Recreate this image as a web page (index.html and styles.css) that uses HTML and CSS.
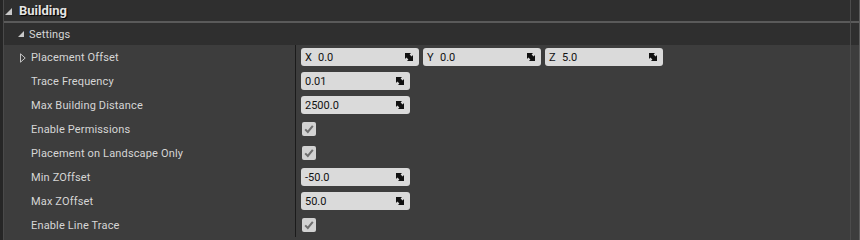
FILE: index.html
```html
<!DOCTYPE html>
<html lang="en">
<head>
  <meta charset="UTF-8">
  <title>Details - Building</title>
  <link rel="stylesheet" href="styles.css">
</head>
<body>
  <div class="details">
    <div class="tree">
      <!-- Category header -->
      <div class="category">
        <svg class="arrow-open" width="7" height="7" viewBox="0 0 7 7"><polygon points="7,0 7,7 0,7"/></svg>
        <span>Building</span>
      </div>

      <!-- Subcategory -->
      <div class="subcategory">
        <svg class="arrow-open small" width="6" height="6" viewBox="0 0 6 6"><polygon points="6,0 6,6 0,6"/></svg>
        <span>Settings</span>
      </div>

      <div class="rows">
        <div class="row">
          <div class="name">
            <svg class="expander" width="6" height="10" viewBox="0 0 6 10"><path d="M0.5 0.8 L5.2 5 L0.5 9.2 Z"/></svg>
            <span>Placement Offset</span>
          </div>
          <div class="value vector">
            <div class="field wide"><span class="axis">X</span><span class="num">0.0</span><svg class="spin" viewBox="0 0 8 8"><path d="M0 0 H6 L4.6 1.4 L6.6 3.4 L8 2 V8 H2 L3.4 6.6 L1.4 4.6 L0 6 Z"/></svg></div>
            <div class="field wide"><span class="axis">Y</span><span class="num">0.0</span><svg class="spin" viewBox="0 0 8 8"><path d="M0 0 H6 L4.6 1.4 L6.6 3.4 L8 2 V8 H2 L3.4 6.6 L1.4 4.6 L0 6 Z"/></svg></div>
            <div class="field wide"><span class="axis">Z</span><span class="num">5.0</span><svg class="spin" viewBox="0 0 8 8"><path d="M0 0 H6 L4.6 1.4 L6.6 3.4 L8 2 V8 H2 L3.4 6.6 L1.4 4.6 L0 6 Z"/></svg></div>
          </div>
        </div>

        <div class="row">
          <div class="name"><span>Trace Frequency</span></div>
          <div class="value">
            <div class="field"><span class="num">0.01</span><svg class="spin" viewBox="0 0 8 8"><path d="M0 0 H6 L4.6 1.4 L6.6 3.4 L8 2 V8 H2 L3.4 6.6 L1.4 4.6 L0 6 Z"/></svg></div>
          </div>
        </div>

        <div class="row">
          <div class="name"><span>Max Building Distance</span></div>
          <div class="value">
            <div class="field"><span class="num">2500.0</span><svg class="spin" viewBox="0 0 8 8"><path d="M0 0 H6 L4.6 1.4 L6.6 3.4 L8 2 V8 H2 L3.4 6.6 L1.4 4.6 L0 6 Z"/></svg></div>
          </div>
        </div>

        <div class="row">
          <div class="name"><span>Enable Permissions</span></div>
          <div class="value">
            <div class="check"><svg viewBox="0 0 14 14"><path d="M3.2 7.4 L5.8 10 L10.8 3.8"/></svg></div>
          </div>
        </div>

        <div class="row">
          <div class="name"><span>Placement on Landscape Only</span></div>
          <div class="value">
            <div class="check"><svg viewBox="0 0 14 14"><path d="M3.2 7.4 L5.8 10 L10.8 3.8"/></svg></div>
          </div>
        </div>

        <div class="row">
          <div class="name"><span>Min ZOffset</span></div>
          <div class="value">
            <div class="field"><span class="num">-50.0</span><svg class="spin" viewBox="0 0 8 8"><path d="M0 0 H6 L4.6 1.4 L6.6 3.4 L8 2 V8 H2 L3.4 6.6 L1.4 4.6 L0 6 Z"/></svg></div>
          </div>
        </div>

        <div class="row">
          <div class="name"><span>Max ZOffset</span></div>
          <div class="value">
            <div class="field"><span class="num">50.0</span><svg class="spin" viewBox="0 0 8 8"><path d="M0 0 H6 L4.6 1.4 L6.6 3.4 L8 2 V8 H2 L3.4 6.6 L1.4 4.6 L0 6 Z"/></svg></div>
          </div>
        </div>

        <div class="row">
          <div class="name"><span>Enable Line Trace</span></div>
          <div class="value">
            <div class="check"><svg viewBox="0 0 14 14"><path d="M3.2 7.4 L5.8 10 L10.8 3.8"/></svg></div>
          </div>
        </div>
      </div>
    </div>

    <!-- scroll gutter on the right -->
    <div class="gutter"></div>
  </div>
</body>
</html>
```

FILE: styles.css
```css
:root {
  --header-bg: #2f2f2f;
  --row-bg: #3d3d3d;
  --line: #5a5a5a;
  --text: #d6d6d6;
  --field-bg: #dadada;
  --font: Roboto, "Liberation Sans", sans-serif;
}

body {
  margin: 0;
  padding: 0;
  background: #262626;
  font-family: var(--font);
  height: 240px;
  overflow: hidden;
}

/* Whole details panel */
.details {
  display: flex;
  margin-left: 3px;
  height: 240px;
}

.tree {
  flex: 1;
  border-left: 1px solid #4a4a4a;
  border-right: 1px solid #4c4c4c;
  background: var(--row-bg);
  display: flex;
  flex-direction: column;
}

/* Scrollbar gutter keeps the same bands as the tree */
.gutter {
  width: 8px;
  border-right: 1px solid #5e5e5e;
  background: linear-gradient(to bottom,
    var(--header-bg) 0, var(--header-bg) 21px,
    var(--line) 21px, var(--line) 23px,
    var(--header-bg) 23px, var(--header-bg) 45px,
    var(--row-bg) 45px);
}

/* Category header */
.category {
  height: 21px;
  background: var(--header-bg);
  border-bottom: 2px solid var(--line);
  display: flex;
  align-items: center;
  padding-left: 1px;
  color: #e4e4e4;
  font-size: 13px;
  font-weight: bold;
  text-shadow: 1px 1px 1px #000;
}
.category .arrow-open {
  margin-right: 7px;
  margin-top: 1px;
}
.arrow-open polygon {
  fill: #c8c8c8;
}

.subcategory {
  height: 22px;
  background: var(--header-bg);
  display: flex;
  align-items: center;
  padding-left: 14px;
  color: var(--text);
  font-size: 11px;
  letter-spacing: 0.15px;
}
.subcategory .arrow-open {
  margin-right: 5px;
}

/* Property rows */
.rows {
  flex: 1;
}
.row {
  display: flex;
  height: 24px;
}
.name {
  width: 292px;
  border-right: 1px solid #1b1b1b;
  display: flex;
  align-items: center;
  padding-left: 27px;
  padding-top: 1px;
  box-sizing: border-box;
  color: var(--text);
  font-size: 11px;
  letter-spacing: 0.15px;
  position: relative;
}
.expander {
  position: absolute;
  left: 16px;
  top: 8px;
}
.expander path {
  fill: none;
  stroke: #c4c4c4;
  stroke-width: 1;
}

.value {
  flex: 1;
  display: flex;
  align-items: center;
  padding-left: 5px;
}
.vector {
  gap: 4px;
}

/* Numeric entry box */
.field {
  width: 109px;
  height: 18px;
  box-sizing: border-box;
  background: var(--field-bg);
  border-radius: 3px;
  display: flex;
  align-items: center;
  padding: 0 6px 0 4px;
  color: #111;
  font-size: 11px;
}
.field.wide {
  width: 118px;
}
.axis {
  width: 13px;
}
.num {
  flex: 1;
}
.spin {
  width: 8px;
  height: 8px;
}
.spin path {
  fill: #111;
}

/* Checkbox */
.check {
  width: 14px;
  height: 14px;
  margin-left: 1px;
  background: #d2d2d2;
  border-radius: 2px;
}
.check svg {
  width: 14px;
  height: 14px;
  display: block;
}
.check path {
  fill: none;
  stroke: #6e6e6e;
  stroke-width: 2;
}
```
